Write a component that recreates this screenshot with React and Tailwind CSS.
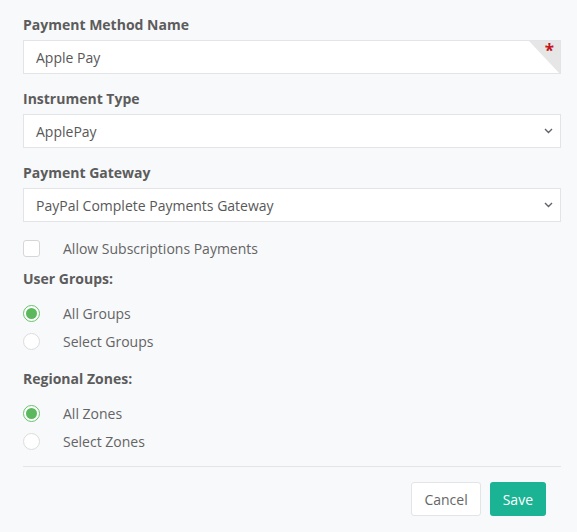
import { useState } from 'react';

const FONT = { fontFamily: '"Open Sans", "Noto Sans", sans-serif' };

function Chevron() {
  return (
    <svg
      className="pointer-events-none absolute right-[7px] top-1/2 -translate-y-1/2"
      width="9"
      height="6"
      viewBox="0 0 9 6"
      fill="none"
    >
      <path d="M1 1l3.5 3.5L8 1" stroke="#5f6368" strokeWidth="1.4" />
    </svg>
  );
}

function SelectBox({ value }) {
  return (
    <div className="relative h-[34px] border border-[#e2e4e8] bg-white">
      <div className="flex h-full items-center pl-[12px] text-[14px] text-[#585858]">{value}</div>
      <Chevron />
    </div>
  );
}

function Radio({ checked, label, onClick }) {
  return (
    <button type="button" onClick={onClick} className="flex h-[28px] items-center text-left">
      <span
        className={`flex h-[17px] w-[17px] items-center justify-center rounded-full border ${
          checked ? 'border-[#67c26a]' : 'border-[#dcdcdc]'
        } bg-white`}
      >
        {checked && <span className="h-[11px] w-[11px] rounded-full bg-[#5cb85c]" />}
      </span>
      <span className="ml-[23px] text-[14px] text-[#646464]">{label}</span>
    </button>
  );
}

export default function App() {
  const [groups, setGroups] = useState('all');
  const [zones, setZones] = useState('all');
  const [subs, setSubs] = useState(false);

  return (
    <div className="min-h-[532px] w-full bg-[#f8f9fb] pl-[23px] pr-[16px] pt-[15px]" style={FONT}>
      {/* name */}
      <div className="mb-[5px] h-[20px] text-[14px] font-bold leading-[20px] text-[#5c5c5c]">
        Payment Method Name
      </div>
      <div className="relative h-[34px] overflow-hidden border border-[#e2e4e8] bg-white">
        <input
          className="h-full w-full bg-transparent pl-[12px] text-[14px] text-[#585858] outline-none"
          defaultValue="Apple Pay"
          style={FONT}
        />
        <div
          className="pointer-events-none absolute right-0 top-0 h-[33px] w-[31px] bg-[#e6e6e6]"
          style={{ clipPath: 'polygon(0 0, 100% 0, 100% 100%)' }}
        />
        <span className="pointer-events-none absolute right-[6px] top-[0px] text-[17px] font-bold leading-[20px] text-[#c4161c]">
          *
        </span>
      </div>

      <div className="mb-[5px] mt-[15px] h-[20px] text-[14px] font-bold leading-[20px] text-[#5c5c5c]">
        Instrument Type
      </div>
      <SelectBox value="ApplePay" />

      <div className="mb-[5px] mt-[15px] h-[20px] text-[14px] font-bold leading-[20px] text-[#5c5c5c]">
        Payment Gateway
      </div>
      <SelectBox value="PayPal Complete Payments Gateway" />

      <button type="button" onClick={() => setSubs(!subs)} className="mt-[16px] flex h-[20px] items-center">
        <span className="flex h-[17px] w-[17px] items-center justify-center rounded-[3px] border border-[#d6d6d6] bg-white">
          {subs && (
            <svg width="11" height="9" viewBox="0 0 11 9" fill="none">
              <path d="M1 4.5l3 3L10 1" stroke="#5cb85c" strokeWidth="2" />
            </svg>
          )}
        </span>
        <span className="ml-[23px] text-[14px] text-[#646464]">Allow Subscriptions Payments</span>
      </button>

      <div className="mt-[11px] h-[20px] text-[14px] font-bold leading-[20px] text-[#5c5c5c]">User Groups:</div>
      <div className="mt-[10px] flex flex-col">
        <Radio checked={groups === 'all'} label="All Groups" onClick={() => setGroups('all')} />
        <Radio checked={groups === 'select'} label="Select Groups" onClick={() => setGroups('select')} />
      </div>

      <div className="mt-[14px] h-[20px] text-[14px] font-bold leading-[20px] text-[#5c5c5c]">Regional Zones:</div>
      <div className="mt-[10px] flex flex-col">
        <Radio checked={zones === 'all'} label="All Zones" onClick={() => setZones('all')} />
        <Radio checked={zones === 'select'} label="Select Zones" onClick={() => setZones('select')} />
      </div>

      <div className="mt-[11px] border-t border-[#e3e5e8]" />

      <div className="mr-[15px] mt-[15px] flex justify-end gap-[9px]">
        <button
          type="button"
          className="h-[34px] rounded-[3px] border border-[#e2e4e8] bg-white px-[12px] text-[14px] text-[#666]"
        >
          Cancel
        </button>
        <button type="button" className="h-[34px] rounded-[3px] bg-[#1ab394] px-[13px] text-[14px] text-white">
          Save
        </button>
      </div>
    </div>
  );
}
